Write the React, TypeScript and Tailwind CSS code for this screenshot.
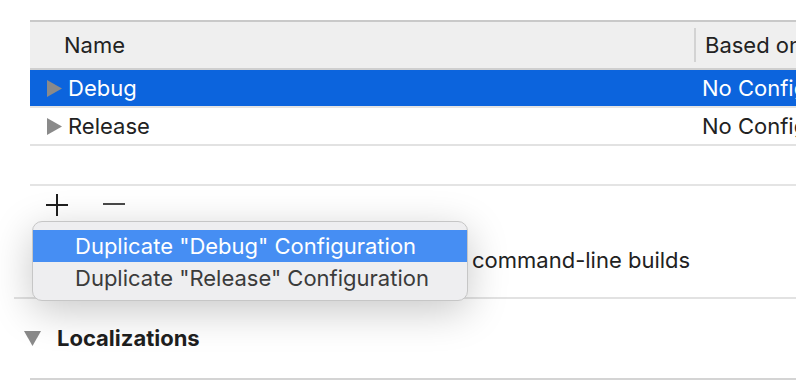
import React from "react";

function Disclosure({ down = false }: { down?: boolean }) {
  if (down) {
    return (
      <svg width="17" height="15" viewBox="0 0 17 15" className="shrink-0">
        <polygon points="0,0 17,0 8.5,15" fill="#8a8a8a" />
      </svg>
    );
  }
  return (
    <svg width="15" height="17" viewBox="0 0 15 17" className="shrink-0">
      <polygon points="0,0 15,8.5 0,17" fill="#8a8a8a" />
    </svg>
  );
}

const rows = [
  { name: "Debug", based: "No Configurations Set", selected: true },
  { name: "Release", based: "No Configurations Set", selected: false },
];

export default function App() {
  return (
    <div
      className="relative w-[796px] h-[382px] overflow-hidden bg-white text-[22px] text-[#222]"
      style={{ fontFamily: "Inter, 'Liberation Sans', sans-serif" }}
    >
      <div className="pt-5">
        {/* configurations table */}
        <div className="ml-[30px] overflow-hidden border-t-2 border-[#c9c9c9]">
          <div className="flex h-[48px] items-center bg-[#efefef] border-b-2 border-[#cfcfcf]">
            <div className="w-[664px] shrink-0 pl-[34px]">Name</div>
            <div className="h-[34px] w-[2px] shrink-0 bg-[#d3d3d3]" />
            <div className="pl-[9px] whitespace-nowrap">Based on Configuration File</div>
          </div>
          {rows.map((r) => (
            <div
              key={r.name}
              className={
                r.selected
                  ? "flex h-[36px] items-center bg-[#0c64dd] text-white"
                  : "flex h-[38px] items-center border-t-2 border-[#e4e4e4]"
              }
            >
              <div className="flex w-[666px] shrink-0 items-center gap-[6px] pl-[17px]">
                <Disclosure />
                <span>{r.name}</span>
              </div>
              <div className="pl-[6px] whitespace-nowrap">{r.based}</div>
            </div>
          ))}
          <div className="border-t-2 border-[#e2e2e2]" />
        </div>

        {/* toolbar + command-line */}
        <div className="mt-[38px] ml-[30px] border-t-2 border-[#e4e4e4]">
          <div className="flex h-[38px] items-center gap-[35px] pl-[16px]">
            <svg width="22" height="22" viewBox="0 0 22 22">
              <path d="M11 0v22M0 11h22" stroke="#1f1f1f" strokeWidth="2" />
            </svg>
            <svg width="22" height="22" viewBox="0 0 22 22">
              <path d="M0 10h22" stroke="#4a4a4a" strokeWidth="2" />
            </svg>
          </div>
          <div className="flex h-[73px] items-center pl-[442px] whitespace-nowrap">
            command-line builds
          </div>
        </div>

        {/* localizations */}
        <div className="ml-[14px] border-t-2 border-[#e2e2e2]">
          <div className="flex h-[79px] items-center gap-[16px] pl-[10px]">
            <Disclosure down />
            <span className="font-bold text-[#1f1f1f]">Localizations</span>
          </div>
        </div>
        <div className="ml-[30px] border-t-2 border-[#d4d4d4]" />
      </div>

      {/* popup menu */}
      <div className="absolute left-[32px] top-[221px] w-[436px] rounded-[10px] border border-[#c6c6c6] bg-[#eeeef0] pt-[8px] pb-[6px] shadow-[0_10px_40px_rgba(0,0,0,0.22)]">
        <div className="flex h-[32px] items-center bg-[#468ef3] pl-[42px] text-white whitespace-nowrap">
          Duplicate "Debug" Configuration
        </div>
        <div className="flex h-[32px] items-center pl-[42px] text-[#3b3b3b] whitespace-nowrap">
          Duplicate "Release" Configuration
        </div>
      </div>
    </div>
  );
}
